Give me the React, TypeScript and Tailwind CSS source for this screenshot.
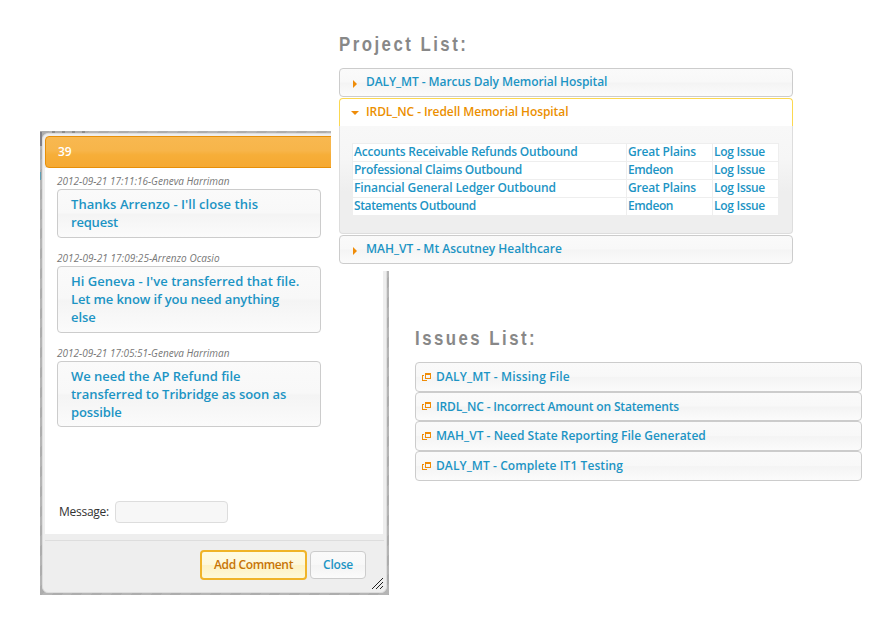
import type { ReactNode } from "react";

const glossy = "bg-[linear-gradient(#fafafa_0%,#f8f8f8_48%,#f4f4f4_52%,#fbfbfb_100%)]";
const family = "font-['Open_Sans','Noto_Sans',sans-serif]";

function Heading({ children }: { children: ReactNode }) {
  return (
    <h2 className="w-max origin-left scale-x-[0.8] font-['Liberation_Sans',Arial,sans-serif] text-[21px] leading-[24px] font-bold tracking-[3.1px] whitespace-nowrap text-[#888]">
      {children}
    </h2>
  );
}

function ProjectHeader({ title, tracking }: { title: string; tracking: string }) {
  return (
    <div className={`flex h-[29px] items-center rounded border border-[#ccc] pl-[13px] ${glossy}`}>
      <svg className="mt-[2px] mr-[9px] h-2 w-[4px]" viewBox="0 0 4 8" fill="#ef8c08">
        <path d="M0 0 4 4 0 8Z" />
      </svg>
      <span className={`mb-[2px] text-[12px] leading-[16px] font-semibold whitespace-nowrap text-[#1c94c4] ${tracking}`}>{title}</span>
    </div>
  );
}

const interfaces = [
  { name: "Accounts Receivable Refunds Outbound", nameTracking: "tracking-[-0.21px]", system: "Great Plains", systemTracking: "tracking-[-0.18px]" },
  { name: "Professional Claims Outbound", nameTracking: "tracking-[-0.27px]", system: "Emdeon", systemTracking: "tracking-[-0.41px]" },
  { name: "Financial General Ledger Outbound", nameTracking: "tracking-[-0.11px]", system: "Great Plains", systemTracking: "tracking-[-0.18px]" },
  { name: "Statements Outbound", nameTracking: "tracking-[-0.37px]", system: "Emdeon", systemTracking: "tracking-[-0.41px]" },
];

function ProjectList() {
  return (
    <section className="relative z-10 ml-[331px] h-[271px] bg-white pt-8 pl-2">
      <Heading>Project List:</Heading>
      <div className="mt-3 flex w-[454px] flex-col gap-px">
        <ProjectHeader title="DALY_MT - Marcus Daly Memorial Hospital" tracking="tracking-[-0.08px]" />
        <div>
          <div className="flex h-[28px] items-center rounded-t border border-b-0 border-[#fbd850] bg-white pl-[11px]">
            <svg className="mt-px mr-[7px] h-[4px] w-2" viewBox="0 0 8 4" fill="#ef8c08">
              <path d="M0 0H8L4 4Z" />
            </svg>
            <span className="mb-[2px] text-[12px] leading-[16px] font-semibold tracking-[-0.09px] whitespace-nowrap text-[#eb8f00]">
              IRDL_NC - Iredell Memorial Hospital
            </span>
          </div>
          <div className="h-[108px] rounded-b border border-t-0 border-[#ddd] bg-[linear-gradient(#f8f8f8_0%,#f6f6f6_30%,#eee_62%,#eee_100%)] pt-[17px] pl-[12px]">
            <div className="flex w-[427px] flex-col border-t border-l border-[#eee] bg-white">
              {interfaces.map((row, i) => (
                <div key={i} className="flex h-[18px] border-b border-[#eee] text-[12px] leading-[16px] font-semibold whitespace-nowrap text-[#1c94c4]">
                  <div className={`w-[274px] border-r border-[#eee] pl-px ${row.nameTracking}`}>{row.name}</div>
                  <div className={`w-[86px] border-r border-[#eee] pl-px ${row.systemTracking}`}>{row.system}</div>
                  <div className="flex-1 border-r border-[#eee] pl-px tracking-[-0.28px]">Log Issue</div>
                </div>
              ))}
            </div>
          </div>
        </div>
        <ProjectHeader title="MAH_VT - Mt Ascutney Healthcare" tracking="tracking-[-0.01px]" />
      </div>
    </section>
  );
}

const issues = [
  { title: "DALY_MT - Missing File", look: "h-[30px] tracking-[0.17px]" },
  { title: "IRDL_NC - Incorrect Amount on Statements", look: "h-[29px] tracking-[-0.15px]" },
  { title: "MAH_VT - Need State Reporting File Generated", look: "h-[30px] tracking-[0.02px]" },
  { title: "DALY_MT - Complete IT1 Testing", look: "h-[30px] tracking-[0.08px]" },
];

function IssuesList() {
  return (
    <section className="ml-[415px] w-[447px] pt-[55px]">
      <Heading>Issues List:</Heading>
      <div className="mt-3 flex flex-col">
        {issues.map((issue) => (
          <div key={issue.title} className={`flex items-center rounded border border-[#ccc] pl-[6px] ${glossy} ${issue.look}`}>
            <svg className="mb-px mr-[5px] h-2 w-[9px]" viewBox="0 0 9 8" fill="#ef8c08" fillRule="evenodd" shapeRendering="crispEdges">
              <path d="M3 0H9V6H3ZM4 2V5H8V2ZM0 2H2V3H1V7H5V8H0Z" />
            </svg>
            <span className="text-[12px] leading-[16px] font-semibold whitespace-nowrap text-[#1c94c4]">{issue.title}</span>
          </div>
        ))}
      </div>
    </section>
  );
}

type Line = { text: string; tracking: string };
const comments: { stamp: string; stampTracking: string; box: string; lines: Line[] }[] = [
  {
    stamp: "2012-09-21 17:11:16-Geneva Harriman",
    stampTracking: "tracking-normal",
    box: "h-[49px] mb-[13px]",
    lines: [
      { text: "Thanks Arrenzo - I'll close this", tracking: "tracking-[0.05px]" },
      { text: "request", tracking: "tracking-[-0.2px]" },
    ],
  },
  {
    stamp: "2012-09-21 17:09:25-Arrenzo Ocasio",
    stampTracking: "tracking-[0.05px]",
    box: "h-[67px] mb-[13px]",
    lines: [
      { text: "Hi Geneva - I've transferred that file.", tracking: "tracking-[0.02px]" },
      { text: "Let me know if you need anything", tracking: "tracking-[-0.13px]" },
      { text: "else", tracking: "tracking-[-0.1px]" },
    ],
  },
  {
    stamp: "2012-09-21 17:05:51-Geneva Harriman",
    stampTracking: "tracking-normal",
    box: "h-[66px]",
    lines: [
      { text: "We need the AP Refund file", tracking: "tracking-[-0.02px]" },
      { text: "transferred to Tribridge as soon as", tracking: "tracking-[-0.04px]" },
      { text: "possible", tracking: "tracking-[-0.1px]" },
    ],
  },
];

function CommentDialog() {
  return (
    <div className="absolute top-[131px] left-[40px] h-[464px] w-[349px] bg-[repeating-linear-gradient(135deg,#adadad_0_7px,#b5b5b5_7px_14px)] p-[2px]">
      <div className="absolute top-[1px] left-0 h-[14px] w-[2px] bg-[#808088]" />
      <div className="absolute top-[41px] left-0 h-[8px] w-px bg-[#5f9fb5]" />
      <div className="absolute top-0 left-[12px] h-[2px] w-[36px] bg-[repeating-linear-gradient(90deg,#8c8c8c_0_3px,#aeaeae_3px_10px)]" />
      <div className="relative flex h-full flex-col rounded-md border border-[#ddd] bg-[#eee] pt-[2px] pl-[2px]">
        <div className="flex h-[32px] w-[339px] shrink-0 items-center rounded border border-[#e78f08] bg-[linear-gradient(#f8b850_0%,#f7b54a_45%,#f6ae38_60%,#f6a932_100%)] pl-[12px] text-[12px] font-semibold tracking-[-0.1px] text-white">
          39
        </div>
        <div className="flex h-[366px] w-[338px] shrink-0 flex-col bg-white pt-[6px] pl-[12px]">
          {comments.map((comment) => (
            <div key={comment.stamp}>
              <div className={`h-[15px] text-[10px] leading-[14px] whitespace-nowrap text-[#777] italic ${comment.stampTracking}`}>
                {comment.stamp}
              </div>
              <div className={`w-[264px] rounded border border-[#ccc] pt-[5px] pl-[13px] text-[13px] leading-[18px] font-semibold whitespace-nowrap text-[#1c94c4] ${glossy} ${comment.box}`}>
                {comment.lines.map((line) => (
                  <div key={line.text} className={line.tracking}>{line.text}</div>
                ))}
              </div>
            </div>
          ))}
          <label className="mt-auto mb-[11px] flex h-[22px] items-center pl-[2px] text-[12px] text-[#333]">
            <span className="w-[56px] tracking-[-0.26px]">Message:</span>
            <input className="h-[22px] w-[113px] rounded border border-[#ddd] bg-[#f7f7f7]" />
          </label>
        </div>
        <div className="mt-[6px] mr-[2px] flex flex-1 items-start border-t border-[#ddd] pt-[9px] pl-[155px] text-[12px] font-semibold">
          <button className="h-[30px] w-[107px] rounded border-2 border-[#f0b429] bg-[linear-gradient(#fffbe2_0%,#fdf8dc_48%,#fdf2c4_52%,#fef9d8_100%)] tracking-[-0.37px] text-[#c77405]">
            Add Comment
          </button>
          <button className={`mt-px ml-[3px] h-[28px] w-[56px] rounded border border-[#ccc] tracking-[-0.21px] text-[#1c94c4] ${glossy}`}>
            Close
          </button>
          <svg className="mt-[28px] ml-[6px] h-[11px] w-[11px]" viewBox="0 0 11 11" stroke="#222" strokeWidth="1" fill="none">
            <path d="M0 11 11 0M4 11 11 4M8 11 11 8" />
          </svg>
        </div>
      </div>
    </div>
  );
}

export default function App() {
  return (
    <main className={`relative h-[619px] w-[876px] overflow-hidden bg-white ${family}`}>
      <CommentDialog />
      <ProjectList />
      <IssuesList />
    </main>
  );
}
